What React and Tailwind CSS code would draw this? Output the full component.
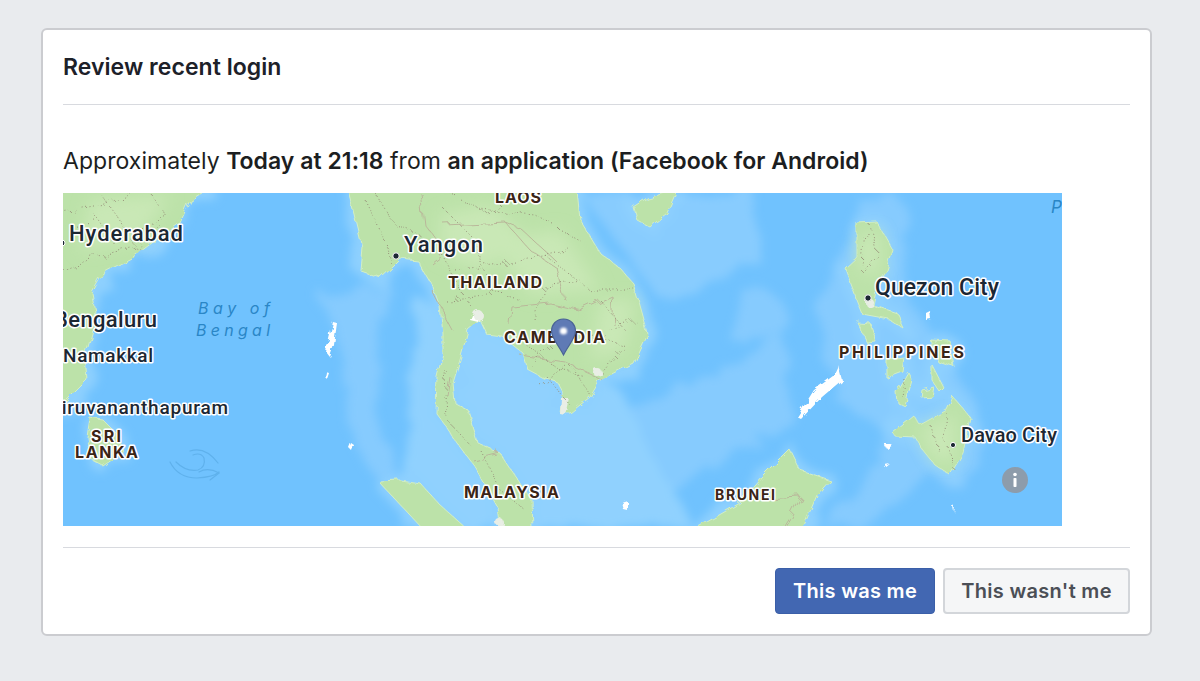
const font = { fontFamily: "Inter, 'Liberation Sans', sans-serif" };

// land shapes, in page coordinates (viewBox starts at the map's corner)
const land = [
  // India
  "M60 190 L207 190 L190 200 L180 223 L160 237 L133 257 L103 273 L92 293 L96 312 L93 330 L85 357 L87 380 L70 397 L60 407 Z",
  // Sri Lanka
  "M90 418 L103 420 L120 437 L122 453 L103 466 L92 460 L87 437 Z",
  // Myanmar to Vietnam, round the Gulf of Thailand
  "M348 190 L353 210 L362 247 L360 270 L380 277 L393 265 L400 258 L417 260 L433 287 L440 307 L443 333 L443 353 L437 377 L436 413 L445 425 L457 443 L475 467 L497 507 L500 530 L533 530 L532 500 L513 473 L500 453 L478 443 L468 410 L455 403 L453 383 L462 353 L468 330 L480 320 L487 335 L503 337 L523 353 L528 370 L543 378 L557 382 L563 393 L560 413 L570 413 L590 397 L600 380 L633 363 L647 333 L633 283 L620 268 L600 253 L580 220 L577 190 Z",
  // Sumatra
  "M378 481 L400 480 L420 483 L440 505 L468 530 L424 530 Z",
  // Hainan
  "M633 207 L647 198 L677 190 L667 213 L650 227 L637 220 Z",
  // Luzon
  "M857 223 L877 222 L893 250 L887 270 L877 287 L873 305 L897 313 L905 330 L890 320 L863 315 L857 300 L845 268 L857 257 Z",
  // Visayas and the small islands
  "M857 322 L870 323 L877 343 L868 344 Z",
  "M887 360 L905 358 L903 372 L887 378 Z",
  "M931 340 L950 341 L954 367 L938 362 Z",
  "M932 365 L944 388 L940 392 L932 380 Z",
  "M896 392 L908 372 L912 380 L905 406 L897 402 Z",
  "M922 390 L934 387 L932 396 L921 397 Z",
  "M892 432 L913 415 L920 425 L947 410 L953 397 L970 417 L963 453 L950 475 L935 465 L923 450 L915 437 L895 436 Z",
  // Borneo
  "M693 530 L740 503 L763 477 L790 450 L800 470 L830 480 L817 495 L802 530 Z",
];

const sand = [
  "M333 322 L337 323 L334 345 L330 357 L326 352 Z",
  "M326 372 L329 373 L327 379 L325 377 Z",
  "M351 443 L354 445 L352 451 L349 448 Z",
  "M797 417 L814 390 L833 376 L838 365 L842 380 L822 397 L801 419 Z",
  "M926 313 L930 311 L931 319 L926 320 Z",
  "M884 444 L892 444 L886 448 Z",
  "M885 465 L890 464 L885 468 Z",
  "M953 506 L955 507 L954 512 Z",
  "M621 502 L627 500 L627 510 L623 509 Z",
  "M472 315 L482 312 L478 322 L470 320 Z",
];

const borders = [
  "M421 193 L425 225 L445 250 L430 262",
  "M445 225 L505 222 L530 250 L557 268 L565 300",
  "M505 222 L520 228 L555 260",
  "M512 307 L550 303 L582 310 L612 296 L614 325",
  "M510 325 L512 307",
  "M520 355 L565 362 L600 378",
  "M432 290 L441 307 L455 333",
  "M450 377 L447 395",
  "M473 460 L500 453",
  "M763 499 L801 497 L792 515 L785 526",
];

const provinces = [
  "M63 213 L105 205 L130 193",
  "M63 270 L98 256 L135 247 L160 225",
  "M100 193 L120 220 L135 247",
  "M70 230 L95 215 L115 245",
  "M150 193 L165 215 L140 230",
  "M365 200 L385 240 L393 265",
  "M375 193 L395 225 L420 235",
  "M440 205 L475 240 L490 290 L520 300",
  "M455 270 L515 262 L570 250",
  "M480 210 L535 215 L580 240",
  "M450 193 L490 215 L510 193",
  "M545 255 L590 290 L635 290",
  "M470 305 L455 280 L440 250",
  "M445 300 L480 298 L510 280",
  "M520 340 L560 370 L585 375",
  "M575 330 L625 345 L600 375",
  "M590 340 L635 320",
  "M600 300 L625 330",
  "M540 385 L570 365 L590 395",
  "M545 375 L570 405",
  "M535 320 L545 285 L580 280",
  "M445 370 L447 420 L470 445",
  "M480 450 L500 490 L525 510",
  "M555 340 L530 365",
  "M870 225 L877 255 L860 272",
  "M865 230 L862 265",
  "M948 415 L945 440 L955 470",
  "M930 425 L938 455",
  "M905 380 L903 398",
];

const shelves = [
  "M320 300 Q345 330 345 400 Q355 470 400 500 L380 420 Q360 340 400 270 Z",
  "M560 420 Q700 400 780 330 L790 420 Q680 480 600 526 L540 526 Z",
  "M740 300 Q770 270 790 320 Q760 350 730 340 Z",
  "M820 526 Q880 470 890 435 L930 470 L880 526 Z",
  "M860 200 L900 200 L910 300 L975 400 L985 470 L950 490 L870 420 L835 400 L820 300 Z",
  "M640 193 L730 193 L700 280 L660 270 Z",
];

// paler patches on the land
const uplands = [
  "M90 200 L170 195 L140 240 L80 250 Z",
  "M440 215 L490 205 L530 240 L480 270 L440 255 Z",
  "M490 240 L560 230 L600 290 L530 295 Z",
  "M600 300 L635 300 L625 350 L590 360 Z",
  "M860 235 L880 232 L880 275 L858 270 Z",
  "M920 430 L955 415 L955 460 L935 460 Z",
];

const cities = [
  { t: "Hyderabad", x: 69, y: 241, s: 22, w: 114 },
  { t: "Yangon", x: 404, y: 252, s: 22, w: 79 },
  { t: "Bengaluru", x: 54, y: 327, s: 22, w: 103 },
  { t: "Namakkal", x: 63, y: 362, s: 19, w: 90 },
  { t: "Thiruvananthapuram", x: 38, y: 414, s: 19, w: 190 },
  { t: "Quezon City", x: 875, y: 295, s: 23, w: 124 },
  { t: "Davao City", x: 961, y: 442, s: 20, w: 96 },
];

const countries = [
  { t: "LAOS", x: 495, y: 203, w: 46 },
  { t: "THAILAND", x: 448, y: 288, w: 94 },
  { t: "CAMBODIA", x: 504, y: 343, w: 101 },
  { t: "MALAYSIA", x: 464, y: 498, w: 95 },
  { t: "BRUNEI", x: 715, y: 500, w: 60, s: 14 },
  { t: "PHILIPPINES", x: 839, y: 358, w: 125 },
  { t: "SRI", x: 91, y: 442, w: 30 },
  { t: "LANKA", x: 75, y: 458, w: 63 },
];

function LoginMap() {
  return (
    <svg viewBox="63 193 999 333" className="block w-[999px] h-[333px]">
      <defs>
        <filter id="soft" x="-20%" y="-20%" width="140%" height="140%">
          <feTurbulence type="fractalNoise" baseFrequency="0.03" numOctaves="3" seed="4" result="n" />
          <feDisplacementMap in="SourceGraphic" in2="n" scale="28" result="d" />
          <feGaussianBlur in="d" stdDeviation="5" />
        </filter>
        <filter id="coast" x="-5%" y="-5%" width="110%" height="110%">
          <feTurbulence type="fractalNoise" baseFrequency="0.09" numOctaves="3" seed="7" result="n" />
          <feDisplacementMap in="SourceGraphic" in2="n" scale="7" />
        </filter>
        <filter id="wobble" x="-5%" y="-5%" width="110%" height="110%">
          <feTurbulence type="fractalNoise" baseFrequency="0.07" numOctaves="2" seed="2" result="n" />
          <feDisplacementMap in="SourceGraphic" in2="n" scale="12" />
        </filter>
        <filter id="patch" x="-30%" y="-30%" width="160%" height="160%">
          <feGaussianBlur stdDeviation="8" />
        </filter>
        <filter id="pinDot" x="-100%" y="-100%" width="300%" height="300%">
          <feGaussianBlur stdDeviation="1.2" />
        </filter>
        <clipPath id="mapClip">
          <rect x="63" y="193" width="999" height="333" />
        </clipPath>
      </defs>
      <g clipPath="url(#mapClip)">
        <rect x="63" y="193" width="999" height="333" fill="#70c2fe" />

        {/* shallow water round the coasts */}
        <g filter="url(#soft)">
          {shelves.map((d, i) => (
            <path key={i} d={d} fill="#86cbfe" />
          ))}
          <path d="M420 300 L620 390 L690 526 L400 526 Z" fill="#90d1fe" />
          <path d="M580 193 L760 193 L760 260 L660 300 Z" fill="#88ccfe" />
          {land.map((d, i) => (
            <path key={i} d={d} fill="#8ed0fe" stroke="#8ed0fe" strokeWidth="12" strokeLinejoin="round" />
          ))}
        </g>

        <g filter="url(#coast)">
          {land.map((d, i) => (
            <path key={i} d={d} fill="#bce2a9" stroke="#d2eec4" strokeWidth="1" strokeLinejoin="round" />
          ))}
        </g>
        <g filter="url(#patch)" fill="#c9e8b6">
          {uplands.map((d, i) => (
            <path key={i} d={d} />
          ))}
        </g>
        <g filter="url(#coast)">
          {sand.map((d, i) => (
            <path key={i} d={d} fill="#ffffff" />
          ))}
        </g>

        {/* city sprawl */}
        <g fill="#e9eee6" filter="url(#coast)">
          <circle cx="478" cy="315" r="5" />
          <circle cx="597" cy="372" r="4" />
          <path d="M561 398 L569 398 L565 415 L560 414 Z" />
          <circle cx="869" cy="302" r="4" />
          <circle cx="499" cy="522" r="4" />
        </g>

        <g filter="url(#wobble)">
          <g fill="none" stroke="#b9b79a" strokeWidth="1">
            {borders.map((d, i) => (
              <path key={i} d={d} />
            ))}
          </g>
          <g fill="none" stroke="#968f78" strokeWidth="1" strokeDasharray="1 2.5">
            {provinces.map((d, i) => (
              <path key={i} d={d} />
            ))}
          </g>
        </g>

        {/* wave mark in the bay */}
        <g fill="none" stroke="#5fb1ec" strokeWidth="1.2" strokeLinecap="round">
          <path d="M170 462 Q178 478 197 478 Q214 477 219 472" />
          <path d="M176 462 Q186 472 198 470 Q206 467 204 458 Q201 452 193 455" />
          <path d="M190 451 Q205 446 218 463" />
          <path d="M199 472 Q208 467 219 473 L210 480" />
        </g>

        <g fontFamily="Roboto, 'Liberation Sans', sans-serif" fill="#1c2733" stroke="#ffffff" strokeWidth="3" strokeLinejoin="round" className="[paint-order:stroke]">
          {cities.map((c) => (
            <text key={c.t} x={c.x} y={c.y} fontSize={c.s} fontWeight="500" textLength={c.w}>
              {c.t}
            </text>
          ))}
        </g>

        <g fontFamily="Inter, 'Liberation Sans', sans-serif" fill="#3a2416" stroke="#ffffff" strokeWidth="3" strokeLinejoin="round" className="[paint-order:stroke]">
          {countries.map((c) => (
            <text key={c.t} x={c.x} y={c.y} fontSize={c.s || 16} fontWeight="700" textLength={c.w}>
              {c.t}
            </text>
          ))}
        </g>

        <g fontFamily="Inter, 'Liberation Sans', sans-serif" fill="#2a86c6" fontStyle="italic">
          <text x="198" y="314" fontSize="16" textLength="72">Bay of</text>
          <text x="196" y="336" fontSize="16" textLength="74">Bengal</text>
          <text x="1051" y="213" fontSize="17">P</text>
        </g>

        {/* city dots */}
        <g fill="#1c2733" stroke="#ffffff" strokeWidth="1">
          <circle cx="62" cy="243" r="3" />
          <circle cx="396" cy="256" r="3.2" />
          <circle cx="868" cy="298" r="3.2" />
          <circle cx="953" cy="445" r="2.6" />
        </g>

        {/* location pin */}
        <path
          d="M563.5 319 C556 319 551.5 325 551.5 331 C551.5 338 559 346 563.5 355 C568 346 575.5 338 575.5 331 C575.5 325 571 319 563.5 319 Z"
          fill="#5f7ab5"
          stroke="#4a6396"
          strokeWidth="1.2"
        />
        <circle cx="563.5" cy="331" r="3.6" fill="#ffffff" filter="url(#pinDot)" />

        {/* info button */}
        <circle cx="1015" cy="480" r="13" fill="#8d9cab" />
        <circle cx="1015" cy="474.5" r="1.8" fill="#ffffff" />
        <rect x="1013.5" y="478" width="3" height="9" rx="0.8" fill="#ffffff" />
      </g>
    </svg>
  );
}

export default function App() {
  return (
    <div className="min-h-screen bg-[#e9ebee] pt-[28px] pl-[41px]" style={font}>
      <div className="w-[1111px] h-[608px] bg-white border-2 border-[#cbccd0] rounded-md px-5 text-[#1c1e21]">
        {/* Header */}
        <div className="h-[75px] border-b-[1.5px] border-[#d8dadf] flex items-center">
          <h1 className="text-[23px] font-semibold tracking-[0.05px] pt-[1px] text-[#1d2129]">Review recent login</h1>
        </div>

        {/* Body */}
        <p className="mt-[41px] h-[31px] text-[23px] leading-[31px] tracking-[0.04px] whitespace-nowrap">
          Approximately <span className="font-semibold">Today at 21:18</span> from{" "}
          <span className="font-semibold">an application (Facebook for Android)</span>
        </p>
        <div className="mt-[16px]">
          <LoginMap />
        </div>

        {/* Footer */}
        <div className="mt-[21px] pt-5 border-t-[1.5px] border-[#d8dadf] flex justify-end gap-2">
          <button className="w-[160px] h-[46px] rounded bg-[#4267b2] border border-[#3b5fa8] text-white text-[20px] font-semibold tracking-[0.3px]">
            This was me
          </button>
          <button className="w-[187px] h-[46px] rounded bg-[#f5f6f7] border-2 border-[#d3d6da] text-[#4b4f56] text-[20px] font-semibold tracking-[0.3px]">
            This wasn't me
          </button>
        </div>
      </div>
    </div>
  );
}
